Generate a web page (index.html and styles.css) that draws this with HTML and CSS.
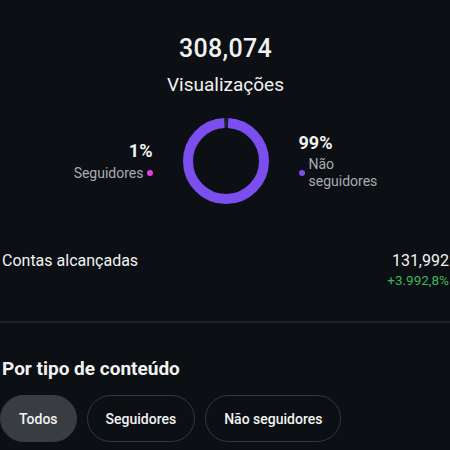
FILE: index.html
```html
<!DOCTYPE html>
<html lang="pt">
<head>
    <meta charset="UTF-8">
    <meta name="viewport" content="width=device-width, initial-scale=1.0">
    <title>Visualizações</title>
    <link rel="stylesheet" href="styles.css">
</head>
<body>
    <div class="summary">
        <div class="total">308,074</div>
        <div class="total-label">Visualizações</div>
    </div>

    <div class="split">
        <div class="side side-left">
            <div class="pct">1%</div>
            <div class="legend">
                <span>Seguidores</span>
                <span class="dot dot-pink"></span>
            </div>
        </div>
        <svg class="donut" width="90" height="90" viewBox="0 0 90 90">
            <circle cx="45" cy="45" r="38" fill="none" stroke="#7b4ef0" stroke-width="10"
                stroke-dasharray="234.8 4" stroke-dashoffset="-2" transform="rotate(-90 45 45)"/>
            <line x1="45" y1="2" x2="45" y2="11" stroke="#3a3646" stroke-width="1"/>
        </svg>
        <div class="side side-right">
            <div class="pct">99%</div>
            <div class="legend">
                <span class="dot dot-purple"></span>
                <span class="legend-text">Não seguidores</span>
            </div>
        </div>
    </div>

    <div class="reach">
        <div class="reach-label">Contas alcançadas</div>
        <div class="reach-values">
            <div class="reach-num">131,992</div>
            <div class="reach-change">+3.992,8%</div>
        </div>
    </div>

    <div class="divider"></div>

    <h2 class="section-title">Por tipo de conteúdo</h2>
    <div class="chips">
        <button class="chip active">Todos</button>
        <button class="chip">Seguidores</button>
        <button class="chip">Não seguidores</button>
    </div>
</body>
</html>
```

FILE: styles.css
```css
body {
    font-family: Roboto, "Noto Sans", sans-serif;
    background: #0c0f14;
    color: #f2f2f2;
    margin: 0;
    padding: 0 1px 0 2px;
    overflow: hidden;
}

.summary {
    text-align: center;
    padding-top: 35px;
}

.total {
    font-size: 25px;
    font-weight: 500;
    line-height: 28px;
    letter-spacing: 0.3px;
}

.total-label {
    font-size: 19px;
    line-height: 22px;
    margin-top: 11px;
}

.split {
    display: flex;
    justify-content: center;
    align-items: center;
    gap: 28px;
    margin-top: 20px;
}

.donut {
    display: block;
}

.side {
    width: 120px;
}

.side-left {
    text-align: right;
}

.pct {
    font-size: 18px;
    font-weight: 700;
    line-height: 20px;
}

.legend {
    display: flex;
    align-items: center;
    gap: 3px;
    color: #a9acb1;
    font-size: 14px;
    line-height: 17px;
    margin-top: 4px;
}

.side-left .legend {
    justify-content: flex-end;
}

.side-right .legend {
    gap: 4px;
    margin-top: 3px;
}

.legend-text {
    max-width: 80px;
}

.dot {
    width: 6px;
    height: 6px;
    border-radius: 50%;
    flex: none;
}

.dot-pink {
    background: #e53ee0;
}

.dot-purple {
    background: #7b4ef0;
}

.reach {
    display: flex;
    justify-content: space-between;
    margin-top: 45px;
}

.reach-label,
.reach-num {
    font-size: 16px;
    line-height: 20px;
}

.reach-values {
    text-align: right;
}

.reach-change {
    color: #3bb55a;
    font-size: 13.5px;
    line-height: 16px;
    margin-top: 1px;
}

.divider {
    height: 2px;
    background: #1e2228;
    margin: 33px -1px 0 -2px;
}

.section-title {
    font-size: 19px;
    font-weight: 700;
    line-height: 22px;
    margin: 35px 0 0;
}

.chips {
    display: flex;
    gap: 10px;
    margin-top: 15px;
    margin-left: -2px;
}

.chip {
    font-family: inherit;
    font-size: 14px;
    font-weight: 500;
    color: #f2f2f2;
    background: transparent;
    border: 1px solid #34373c;
    border-radius: 24px;
    height: 47px;
    padding: 0 18px;
}

.chip.active {
    background: #393c41;
    border-color: #393c41;
}
```
